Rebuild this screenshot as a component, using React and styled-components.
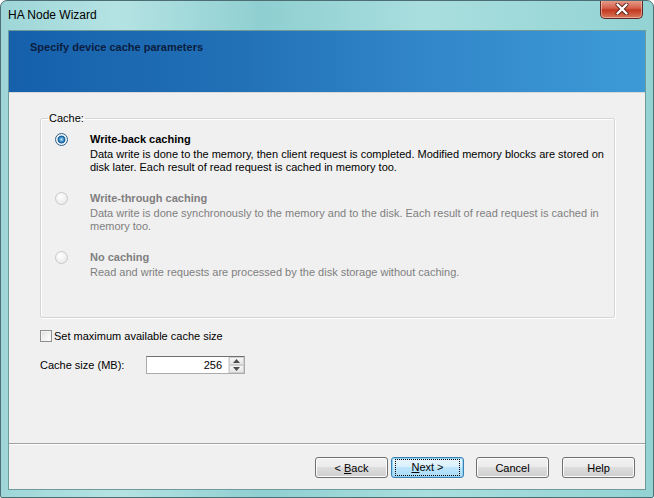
import React from "react";
import styled, { createGlobalStyle } from "styled-components";

const Global = createGlobalStyle`
  html, body { margin: 0; padding: 0; background: #ffffff; }
  body { font-family: Tahoma, "Liberation Sans", Arial, sans-serif; font-size: 11px; }
  * { box-sizing: border-box; }
`;

const Window = styled.div`
  width: 654px;
  height: 498px;
  display: flex;
  flex-direction: column;
  border: 1px solid #4d6f73;
  border-radius: 7px 7px 2px 2px;
  background: linear-gradient(90deg, #9ed6d8 0%, #b5e3e3 18%, #8fcfd1 40%, #a9dede 65%, #93d3d4 100%);
  overflow: hidden;
`;

const TitleBar = styled.div`
  height: 29px;
  display: flex;
  align-items: flex-start;
  justify-content: space-between;
  padding: 0 10px 0 7px;
`;

const TitleText = styled.div`
  font-family: "Liberation Sans", Arial, sans-serif;
  font-size: 12px;
  color: #000;
  padding-top: 7px;
`;

const CloseButton = styled.div`
  width: 43px;
  height: 19px;
  margin-top: -1px;
  border: 1px solid #5a2a25;
  border-top: none;
  border-radius: 0 0 5px 5px;
  background: linear-gradient(180deg, #e8a190 0%, #d5614c 45%, #c2381f 55%, #d9785b 100%);
  display: flex;
  align-items: center;
  justify-content: center;
  box-shadow: inset 0 0 0 1px rgba(255, 220, 210, 0.5);
`;

const Client = styled.div`
  flex: 1;
  margin: 0 7px 7px 7px;
  border: 1px solid #6f9a9c;
  background: #f0f0f0;
  display: flex;
  flex-direction: column;
`;

const Header = styled.div`
  height: 62px;
  background: linear-gradient(90deg, #1660ab 0%, #2170b6 35%, #3186c9 65%, #3e9ad7 100%);
  padding: 10px 0 0 21px;
  border-bottom: 1px solid #d8d8d8;
`;

const HeaderTitle = styled.div`
  font-family: "Liberation Sans", Arial, sans-serif;
  font-weight: bold;
  font-size: 11px;
  color: #0a1d3f;
`;

const Body = styled.div`
  flex: 1;
  padding: 19px 31px 0 31px;
  display: flex;
  flex-direction: column;
`;

const GroupBox = styled.fieldset`
  margin: 0;
  padding: 8px 0 0 12px;
  border: 1px solid #d5d5d5;
  border-radius: 2px;
  height: 206px;
  width: 575px;
  box-shadow: 1px 1px 0 #ffffff inset, 1px 1px 0 #ffffff;
`;

const Legend = styled.legend`
  padding: 0 1px;
  margin-left: -5px;
  color: #000;
  font-family: "Liberation Sans", Arial, sans-serif;
  font-size: 11px;
`;

const Option = styled.div`
  display: flex;
  align-items: flex-start;
  margin-bottom: ${(p) => p.$gap}px;
  color: ${(p) => (p.$disabled ? "#7f7f7f" : "#000")};
`;

const Radio = styled.div`
  width: 13px;
  height: 13px;
  border-radius: 50%;
  margin: 1px 22px 0 2px;
  flex: none;
  border: 1px solid ${(p) => (p.$disabled ? "#c9c9c9" : "#2f5e84")};
  background: ${(p) =>
    p.$disabled
      ? "radial-gradient(circle at 40% 35%, #ffffff 0%, #eeeeee 60%, #e2e2e2 100%)"
      : "radial-gradient(circle at 50% 50%, #bfe3f8 0%, #3a8dc8 30%, #0d4f85 45%, #dbe9f3 55%, #ffffff 100%)"};
  ${(p) => !p.$disabled && `box-shadow: inset 0 0 0 1px #f2f7fb;`}
`;

const OptionText = styled.div`
  display: flex;
  flex-direction: column;
`;

const OptionTitle = styled.div`
  font-family: "Liberation Sans", Arial, sans-serif;
  font-weight: bold;
  font-size: 11px;
  line-height: 14px;
  height: 16px;
`;

const OptionDesc = styled.div`
  font-family: "Liberation Sans", Arial, sans-serif;
  font-size: 11px;
  line-height: 13px;
  width: 515px;
`;

const CheckRow = styled.label`
  display: flex;
  align-items: center;
  margin: 12px 0 0 0;
  font-family: "Liberation Sans", Arial, sans-serif;
  font-size: 11px;
  color: #000;
`;

const CheckBox = styled.span`
  width: 12px;
  height: 12px;
  margin-right: 2px;
  border: 1px solid #8f8f8f;
  background: linear-gradient(135deg, #dcdcdc 0%, #f4f4f4 60%, #ffffff 100%);
  box-shadow: inset 0 0 0 1px #f4f4f4;
`;

const SizeRow = styled.div`
  display: flex;
  align-items: center;
  margin: 14px 0 0 0;
  font-family: "Liberation Sans", Arial, sans-serif;
  font-size: 11px;
`;

const SizeLabel = styled.span`
  width: 106px;
`;

const SpinBox = styled.div`
  display: flex;
  height: 18px;
  border: 1px solid #ababab;
  border-top-color: #707070;
  background: #fff;
`;

const SpinInput = styled.div`
  width: 82px;
  text-align: right;
  padding: 2px 6px 0 0;
  font-family: "Liberation Sans", Arial, sans-serif;
  font-size: 11px;
  border-right: 1px solid #e0e0e0;
`;

const SpinButtons = styled.div`
  width: 15px;
  display: flex;
  flex-direction: column;
  background: #f0f0f0;
`;

const SpinBtn = styled.div`
  flex: 1;
  display: flex;
  align-items: center;
  justify-content: center;
  border: 1px solid #cfcfcf;
  background: linear-gradient(180deg, #f7f7f7, #e5e5e5);
`;

const Separator = styled.div`
  height: 2px;
  border-top: 1px solid #a0a0a0;
  border-bottom: 1px solid #ffffff;
`;

const ButtonRow = styled.div`
  height: 44px;
  display: flex;
  justify-content: flex-end;
  align-items: flex-start;
  padding: 12px 10px 0 0;
`;

const Button = styled.div`
  width: 73px;
  height: 21px;
  margin-left: ${(p) => p.$ml}px;
  border: 1px solid ${(p) => (p.$default ? "#3c7fb1" : "#707070")};
  border-radius: 3px;
  background: ${(p) =>
    p.$default
      ? "linear-gradient(180deg, #eaf6fd 0%, #d9f0fc 49%, #bee6fd 50%, #a7d9f5 100%)"
      : "linear-gradient(180deg, #f2f2f2 0%, #ebebeb 49%, #dddddd 50%, #cfcfcf 100%)"};
  box-shadow: inset 0 0 0 1px ${(p) => (p.$default ? "#8ed4f5" : "#fcfcfc")};
  display: flex;
  align-items: center;
  justify-content: center;
  font-family: "Liberation Sans", Arial, sans-serif;
  font-size: 11px;
  color: #000;
`;

const Label = styled.span`
  white-space: pre;
`;

const Focus = styled.span`
  padding: 0 14px;
  line-height: 13px;
  white-space: pre;
  outline: 1px dotted #000;
  outline-offset: 1px;
`;

const U = styled.span`
  text-decoration: underline;
`;

const XIcon = () => (
  <svg width="16" height="12" viewBox="0 0 16 12">
    <path d="M3.5 1.5 L12.5 10.5 M12.5 1.5 L3.5 10.5" stroke="#5a2218" strokeWidth="4" strokeLinecap="round" />
    <path d="M3.5 1.5 L12.5 10.5 M12.5 1.5 L3.5 10.5" stroke="#ffffff" strokeWidth="2.4" strokeLinecap="round" />
  </svg>
);

const Arrow = ({ up }) => (
  <svg width="7" height="4" viewBox="0 0 7 4">
    <path d={up ? "M0 4 L3.5 0 L7 4 Z" : "M0 0 L3.5 4 L7 0 Z"} fill="#4d4d4d" />
  </svg>
);

const options = [
  {
    title: "Write-back caching",
    desc: "Data write is done to the memory, then client request is completed. Modified memory blocks are stored on disk later. Each result of read request is cached in memory too.",
    gap: 17,
  },
  {
    title: "Write-through caching",
    desc: "Data write is done synchronously to the memory and to the disk. Each result of read request is cached in memory too.",
    disabled: true,
    gap: 17,
  },
  {
    title: "No caching",
    desc: "Read and write requests are processed by the disk storage without caching.",
    disabled: true,
    gap: 0,
  },
];

export default function App() {
  return (
    <>
      <Global />
      <Window>
        <TitleBar>
          <TitleText>HA Node Wizard</TitleText>
          <CloseButton>
            <XIcon />
          </CloseButton>
        </TitleBar>
        <Client>
          <Header>
            <HeaderTitle>Specify device cache parameters</HeaderTitle>
          </Header>
          <Body>
            <GroupBox>
              <Legend>Cache:</Legend>
              {options.map((o) => (
                <Option key={o.title} $disabled={o.disabled} $gap={o.gap}>
                  <Radio $disabled={o.disabled} />
                  <OptionText>
                    <OptionTitle>{o.title}</OptionTitle>
                    <OptionDesc>{o.desc}</OptionDesc>
                  </OptionText>
                </Option>
              ))}
            </GroupBox>
            <CheckRow>
              <CheckBox />
              Set maximum available cache size
            </CheckRow>
            <SizeRow>
              <SizeLabel>Cache size (MB):</SizeLabel>
              <SpinBox>
                <SpinInput>256</SpinInput>
                <SpinButtons>
                  <SpinBtn>
                    <Arrow up />
                  </SpinBtn>
                  <SpinBtn>
                    <Arrow />
                  </SpinBtn>
                </SpinButtons>
              </SpinBox>
            </SizeRow>
          </Body>
          <Separator />
          <ButtonRow>
            <Button $ml={0}>
              <Label>
                {"< "}
                <U>B</U>ack
              </Label>
            </Button>
            <Button $ml={3} $default>
              <Focus>
                <U>N</U>
                {"ext >"}
              </Focus>
            </Button>
            <Button $ml={12}>Cancel</Button>
            <Button $ml={13}>Help</Button>
          </ButtonRow>
        </Client>
      </Window>
    </>
  );
}
